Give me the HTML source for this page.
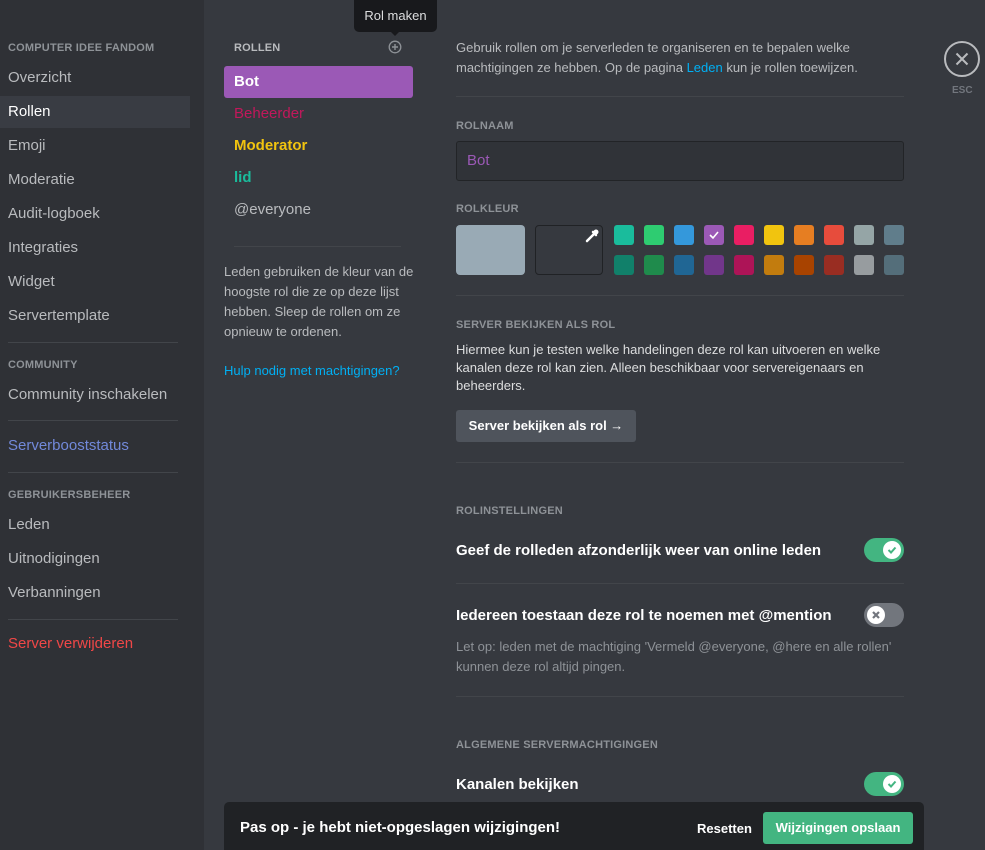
<!DOCTYPE html>
<html><head><meta charset="utf-8"><style>
*{margin:0;padding:0;box-sizing:border-box}
body{width:985px;height:850px;overflow:hidden;background:#36393f;font-family:"Liberation Sans",sans-serif;position:relative;color:#dcddde}
.a{position:absolute;white-space:nowrap}
#side{position:absolute;left:0;top:0;width:204px;height:850px;background:#2f3136}
.si{position:absolute;left:8px;font-size:15px;color:#b9bbbe;line-height:20px}
.hd{position:absolute;font-size:11px;font-weight:bold;color:#8e9297;letter-spacing:.2px}
.dv{position:absolute;height:1px;background:#42454a}
.sw{position:absolute;width:20px;height:20px;border-radius:3px}
.tg{position:absolute;width:40px;height:24px;border-radius:12px}
.tg i{position:absolute;top:3px;width:18px;height:18px;border-radius:50%;background:#fff}
p.t{font-size:13px;line-height:18px;color:#b9bbbe}
</style></head><body>
<div id="side">
<div class="hd" style="left:8px;top:42px">COMPUTER IDEE FANDOM</div>
<div class="si" style="top:68px">Overzicht</div>
<div style="position:absolute;left:0;top:96px;width:190px;height:32px;background:#393c43"></div>
<div class="si" style="top:102px;color:#fff">Rollen</div>
<div class="si" style="top:136px">Emoji</div>
<div class="si" style="top:170px">Moderatie</div>
<div class="si" style="top:204px">Audit-logboek</div>
<div class="si" style="top:238px">Integraties</div>
<div class="si" style="top:272px">Widget</div>
<div class="si" style="top:306px">Servertemplate</div>
<div class="dv" style="left:8px;top:342px;width:170px"></div>
<div class="hd" style="left:8px;top:359px">COMMUNITY</div>
<div class="si" style="top:385px">Community inschakelen</div>
<div class="dv" style="left:8px;top:420px;width:170px"></div>
<div class="si" style="top:436px;color:#7289da">Serverbooststatus</div>
<div class="dv" style="left:8px;top:472px;width:170px"></div>
<div class="hd" style="left:8px;top:489px">GEBRUIKERSBEHEER</div>
<div class="si" style="top:515px">Leden</div>
<div class="si" style="top:549px">Uitnodigingen</div>
<div class="si" style="top:583px">Verbanningen</div>
<div class="dv" style="left:8px;top:619px;width:170px"></div>
<div class="si" style="top:634px;color:#f04747">Server verwijderen</div>
</div>

<div class="a" style="left:354px;top:0;width:83px;height:32px;background:#18191c;border-radius:0 0 5px 5px;color:#dcddde;font-size:13px;line-height:32px;text-align:center">Rol maken</div>
<div class="a" style="left:390px;top:31px;border:5px solid transparent;border-top-color:#18191c"></div>
<div class="hd" style="left:234px;top:42px;color:#b9bbbe">ROLLEN</div>
<svg class="a" style="left:388px;top:40px" width="14" height="14"><circle cx="7" cy="7" r="5.8" fill="none" stroke="#8e9297" stroke-width="1.3"/><path d="M7 4v6M4 7h6" stroke="#8e9297" stroke-width="1.4"/></svg>
<div class="a" style="left:224px;top:66px;width:189px;height:32px;background:#9b59b6;border-radius:3px"></div>
<div class="a" style="left:234px;top:73px;font-size:15px;font-weight:bold;color:#fff">Bot</div>
<div class="a" style="left:234px;top:105px;font-size:15px;color:#c2185b">Beheerder</div>
<div class="a" style="left:234px;top:137px;font-size:15px;font-weight:bold;color:#f1c40f">Moderator</div>
<div class="a" style="left:234px;top:169px;font-size:15px;font-weight:bold;color:#1abc9c">lid</div>
<div class="a" style="left:234px;top:201px;font-size:15px;color:#b9bbbe">@everyone</div>
<div class="dv" style="left:234px;top:246px;width:167px"></div>
<div class="a" style="left:224px;top:262px;font-size:13px;line-height:20px;color:#b9bbbe;white-space:normal;width:195px">Leden gebruiken de kleur van de hoogste rol die ze op deze lijst hebben. Sleep de rollen om ze opnieuw te ordenen.</div>
<div class="a" style="left:224px;top:363px;font-size:13px;color:#00b0f4">Hulp nodig met machtigingen?</div>

<div class="a" style="left:456px;top:38px;width:448px;white-space:normal"><p class="t" style="line-height:20px">Gebruik rollen om je serverleden te organiseren en te bepalen welke machtigingen ze hebben. Op de pagina <span style="color:#00b0f4">Leden</span> kun je rollen toewijzen.</p></div>
<div class="dv" style="left:456px;top:96px;width:448px"></div>
<div class="hd" style="left:456px;top:120px">ROLNAAM</div>
<div class="a" style="left:456px;top:141px;width:448px;height:40px;background:#303338;border:1px solid #222427;border-radius:3px;padding:0 10px;line-height:38px;font-size:15px;color:#9b59b6">Bot</div>
<div class="hd" style="left:456px;top:203px">ROLKLEUR</div>
<div class="a" style="left:456px;top:225px;width:69px;height:50px;background:#99aab5;border-radius:4px"></div>
<div class="a" style="left:535px;top:225px;width:68px;height:50px;border:1px solid #202225;border-radius:4px"></div>
<svg class="a" style="left:584px;top:228px" width="16" height="16"><path d="M3 13l7-7M9 4l3 3" stroke="#fff" stroke-width="2.5" stroke-linecap="round"/><circle cx="12" cy="4" r="2.5" fill="#fff"/></svg>
<div class="sw" style="left:614px;top:225px;background:#1abc9c"></div>
<div class="sw" style="left:644px;top:225px;background:#2ecc71"></div>
<div class="sw" style="left:674px;top:225px;background:#3498db"></div>
<div class="sw" style="left:704px;top:225px;background:#9b59b6"></div>
<svg class="a" style="left:707px;top:228px" width="14" height="14"><path d="M3 7l3 3 5-6" stroke="#fff" stroke-width="1.6" fill="none"/></svg>
<div class="sw" style="left:734px;top:225px;background:#e91e63"></div>
<div class="sw" style="left:764px;top:225px;background:#f1c40f"></div>
<div class="sw" style="left:794px;top:225px;background:#e67e22"></div>
<div class="sw" style="left:824px;top:225px;background:#e74c3c"></div>
<div class="sw" style="left:854px;top:225px;background:#95a5a6"></div>
<div class="sw" style="left:884px;top:225px;background:#607d8b"></div>
<div class="sw" style="left:614px;top:255px;background:#11806a"></div>
<div class="sw" style="left:644px;top:255px;background:#1f8b4c"></div>
<div class="sw" style="left:674px;top:255px;background:#206694"></div>
<div class="sw" style="left:704px;top:255px;background:#71368a"></div>
<div class="sw" style="left:734px;top:255px;background:#ad1457"></div>
<div class="sw" style="left:764px;top:255px;background:#c27c0e"></div>
<div class="sw" style="left:794px;top:255px;background:#a84300"></div>
<div class="sw" style="left:824px;top:255px;background:#992d22"></div>
<div class="sw" style="left:854px;top:255px;background:#979c9f"></div>
<div class="sw" style="left:884px;top:255px;background:#546e7a"></div>
<div class="dv" style="left:456px;top:295px;width:448px"></div>
<div class="hd" style="left:456px;top:319px">SERVER BEKIJKEN ALS ROL</div>
<div class="a" style="left:456px;top:341px;width:448px;white-space:normal"><p class="t" style="color:#dcddde">Hiermee kun je testen welke handelingen deze rol kan uitvoeren en welke kanalen deze rol kan zien. Alleen beschikbaar voor servereigenaars en beheerders.</p></div>
<div class="a" style="left:456px;top:410px;width:180px;height:32px;background:#4f545c;border-radius:3px;color:#fff;font-size:13px;font-weight:bold;line-height:32px;text-align:center">Server bekijken als rol →</div>
<div class="dv" style="left:456px;top:462px;width:448px"></div>
<div class="hd" style="left:456px;top:505px">ROLINSTELLINGEN</div>
<div class="a" style="left:456px;top:542px;font-size:15px;font-weight:bold;color:#fff">Geef de rolleden afzonderlijk weer van online leden</div>
<div class="tg" style="left:864px;top:538px;background:#43b581"><i style="left:19px"></i></div>
<svg class="a" style="left:885px;top:543px" width="14" height="14"><path d="M3.5 7l2.5 2.5 4.5-5" stroke="#43b581" stroke-width="2" fill="none"/></svg>
<div class="dv" style="left:456px;top:583px;width:448px"></div>
<div class="a" style="left:456px;top:607px;font-size:15px;font-weight:bold;color:#fff">Iedereen toestaan deze rol te noemen met @mention</div>
<div class="tg" style="left:864px;top:603px;background:#72767d"><i style="left:3px"></i></div>
<svg class="a" style="left:867px;top:606px" width="18" height="18"><path d="M6 6l6 6M12 6l-6 6" stroke="#72767d" stroke-width="2.2"/></svg>
<div class="a" style="left:456px;top:637px;width:448px;white-space:normal"><p class="t" style="line-height:20px;color:#8e9297">Let op: leden met de machtiging 'Vermeld @everyone, @here en alle rollen' kunnen deze rol altijd pingen.</p></div>
<div class="dv" style="left:456px;top:696px;width:448px"></div>
<div class="hd" style="left:456px;top:739px">ALGEMENE SERVERMACHTIGINGEN</div>
<div class="a" style="left:456px;top:776px;font-size:15px;font-weight:bold;color:#fff">Kanalen bekijken</div>
<div class="tg" style="left:864px;top:772px;background:#43b581"><i style="left:19px"></i></div>
<svg class="a" style="left:885px;top:777px" width="14" height="14"><path d="M3.5 7l2.5 2.5 4.5-5" stroke="#43b581" stroke-width="2" fill="none"/></svg>

<svg class="a" style="left:943px;top:40px" width="38" height="38"><circle cx="19" cy="19" r="17" fill="none" stroke="#b9bbbe" stroke-width="2"/><path d="M13.5 13.5l11 11M24.5 13.5l-11 11" stroke="#b9bbbe" stroke-width="2"/></svg>
<div class="a" style="left:952px;top:85px;font-size:10px;font-weight:bold;color:#72767d">ESC</div>

<div class="a" style="left:224px;top:802px;width:700px;height:48px;background:#202225;border-radius:5px 5px 0 0"></div>
<div class="a" style="left:240px;top:819px;font-size:15px;font-weight:bold;color:#fff">Pas op - je hebt niet-opgeslagen wijzigingen!</div>
<div class="a" style="left:697px;top:821px;font-size:13px;font-weight:bold;color:#fff">Resetten</div>
<div class="a" style="left:763px;top:812px;width:150px;height:32px;background:#43b581;border-radius:3px;color:#fff;font-size:13px;font-weight:bold;line-height:32px;text-align:center">Wijzigingen opslaan</div>
</body></html>
